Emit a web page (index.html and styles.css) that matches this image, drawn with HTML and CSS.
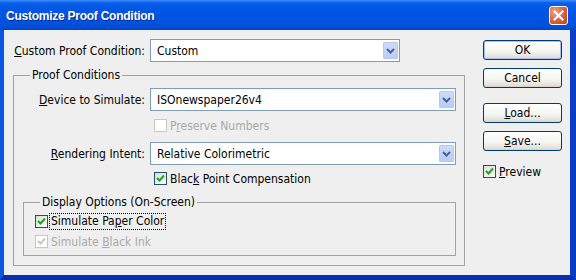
FILE: index.html
```html
<!DOCTYPE html>
<html lang="en">
<head>
    <meta charset="UTF-8">
    <title>Customize Proof Condition</title>
    <link rel="stylesheet" href="styles.css">
</head>
<body>
    <div class="window">
        <div class="titlebar">
            <span class="title">Customize Proof Condition</span>
            <span class="close">
                <svg width="17" height="17" viewBox="0 0 17 17"><path d="M4.5 4.5 L12.5 12.5 M12.5 4.5 L4.5 12.5" stroke="#fff" stroke-width="2.2" stroke-linecap="square"/></svg>
            </span>
        </div>

        <div class="frame">
            <div class="main">
                <div class="field">
                    <span class="label wide"><u>C</u>ustom Proof Condition:</span>
                    <div class="select short">
                        <span class="value">Custom</span>
                        <span class="arrow"><svg width="15" height="17" viewBox="0 0 15 17"><path d="M4 7 L7.5 10.5 L11 7" fill="none" stroke="#4d6185" stroke-width="2"/></svg></span>
                    </div>
                </div>

                <fieldset class="group outer">
                    <legend>Proof Conditions</legend>

                    <div class="field">
                        <span class="label"><u>D</u>evice to Simulate:</span>
                        <div class="select">
                            <span class="value">ISOnewspaper26v4</span>
                            <span class="arrow"><svg width="15" height="17" viewBox="0 0 15 17"><path d="M4 7 L7.5 10.5 L11 7" fill="none" stroke="#4d6185" stroke-width="2"/></svg></span>
                        </div>
                    </div>

                    <div class="check indent disabled gap-preserve">
                        <span class="box"></span>
                        <span>P<u>r</u>eserve Numbers</span>
                    </div>

                    <div class="field gap-render">
                        <span class="label"><u>R</u>endering Intent:</span>
                        <div class="select">
                            <span class="value">Relative Colorimetric</span>
                            <span class="arrow"><svg width="15" height="17" viewBox="0 0 15 17"><path d="M4 7 L7.5 10.5 L11 7" fill="none" stroke="#4d6185" stroke-width="2"/></svg></span>
                        </div>
                    </div>

                    <div class="check indent gap-black">
                        <span class="box"><svg width="11" height="11" viewBox="0 0 11 11"><path d="M2 5 L4.5 7.5 L9 2.5" fill="none" stroke="#21a121" stroke-width="2"/></svg></span>
                        <span>Blac<u>k</u> Point Compensation</span>
                    </div>

                    <fieldset class="group inner">
                        <legend>Display Options (On-Screen)</legend>

                        <div class="check">
                            <span class="box"><svg width="11" height="11" viewBox="0 0 11 11"><path d="M2 5 L4.5 7.5 L9 2.5" fill="none" stroke="#21a121" stroke-width="2"/></svg></span>
                            <span class="focus">Simulate Pa<u>p</u>er Color</span>
                        </div>

                        <div class="check disabled gap-ink">
                            <span class="box"><svg width="11" height="11" viewBox="0 0 11 11"><path d="M2 5 L4.5 7.5 L9 2.5" fill="none" stroke="#cac8bb" stroke-width="2"/></svg></span>
                            <span>Simulate <u>B</u>lack Ink</span>
                        </div>
                    </fieldset>
                </fieldset>
            </div>

            <div class="side">
                <button class="btn default">OK</button>
                <button class="btn">Cancel</button>
                <button class="btn gap-load"><u>L</u>oad...</button>
                <button class="btn"><u>S</u>ave...</button>
                <div class="check gap-preview">
                    <span class="box"><svg width="11" height="11" viewBox="0 0 11 11"><path d="M2 5 L4.5 7.5 L9 2.5" fill="none" stroke="#21a121" stroke-width="2"/></svg></span>
                    <span><u>P</u>review</span>
                </div>
            </div>
        </div>
    </div>
</body>
</html>
```

FILE: styles.css
```css
body {
    margin: 0;
    font-family: "DejaVu Sans Condensed", "DejaVu Sans", sans-serif;
    font-stretch: condensed;
    font-size: 12px;
    color: #000;
}

.window {
    width: 576px;
    height: 280px;
    display: flex;
    flex-direction: column;
}

.titlebar {
    height: 30px;
    flex: none;
    display: flex;
    align-items: center;
    justify-content: space-between;
    padding: 0 8px 0 6px;
    background: linear-gradient(#3d8ffb 0, #0a5ee9 3px, #0056e6 9px, #0054e3 60%, #0150d8 88%, #0344c4 100%);
}

.title {
    font-family: "Liberation Sans", Arial, sans-serif;
    font-stretch: normal;
    font-weight: bold;
    font-size: 12px;
    letter-spacing: -0.25px;
    color: #fff;
    text-shadow: 1px 1px 0 #0a2a9a;
    padding-top: 2px;
}

.close {
    width: 17px;
    height: 17px;
    border: 1px solid #fff;
    border-radius: 3px;
    background: radial-gradient(circle at 30% 30%, #f2a283 0%, #de5d36 55%, #c2401e 100%);
    display: flex;
}

.frame {
    flex: 1;
    display: flex;
    gap: 18px;
    padding: 9px 0 0 9px;
    background: #efefef;
    border-left: 4px solid #0b56e2;
    border-right: 6px solid #0a3cc8;
    border-bottom: 5px solid #0a2fae;
}

.main {
    width: 452px;
}

.field {
    display: flex;
    align-items: center;
    height: 23px;
}

.label {
    width: 127px;
    flex: none;
    box-sizing: border-box;
    padding-right: 5px;
    text-align: right;
    white-space: nowrap;
}

.label.wide {
    width: 137px;
}

.select {
    flex: 1;
    height: 23px;
    box-sizing: border-box;
    border: 1px solid #7f9db9;
    background: #fff;
    display: flex;
    align-items: center;
    justify-content: space-between;
    padding: 0 1px 0 6px;
}

.select.short {
    flex: none;
    width: 250px;
}

.arrow {
    width: 15px;
    height: 17px;
    box-sizing: border-box;
    border: 1px solid #b8c8f0;
    border-radius: 1px;
    background: linear-gradient(#cddbfc, #b8cbfa);
    display: flex;
}

.arrow svg {
    margin: -1px;
}

.group {
    margin: 0;
    min-width: 0;
    border: 1px solid #a3a3a3;
}

.group legend {
    line-height: 16px;
    padding: 0 2px;
}

.outer {
    margin-top: 5px;
    padding: 5px 8px 9px 9px;
}

.outer > legend {
    margin-left: 7px;
}

.inner {
    margin-top: 8px;
    padding: 4px 8px 6px 11px;
}

.inner > legend {
    margin-left: 5px;
}

.check {
    display: flex;
    align-items: center;
    gap: 3px;
    height: 15px;
    white-space: nowrap;
}

.check.indent {
    padding-left: 131px;
}

.box {
    width: 13px;
    height: 13px;
    flex: none;
    box-sizing: border-box;
    border: 1px solid #1c5180;
    background: linear-gradient(135deg, #dcdcd7, #fff);
    display: flex;
    align-items: center;
    justify-content: center;
}

.disabled {
    color: #a9a9a9;
}

.disabled .box {
    border-color: #cac8bb;
    background: #fff;
}

.focus {
    outline: 1px dotted #000;
    padding: 0 1px;
    margin-left: -1px;
    line-height: 15px;
}

.gap-preserve {
    margin-top: 7px;
}

.gap-render {
    margin-top: 9px;
}

.gap-black {
    margin-top: 6px;
}

.gap-ink {
    margin-top: 5px;
}

.side {
    width: 79px;
    padding-top: 1px;
    display: flex;
    flex-direction: column;
}

.btn {
    height: 20px;
    margin: 0;
    padding: 0;
    font: inherit;
    color: #000;
    border: 1px solid #003c74;
    border-radius: 3px;
    background: linear-gradient(#ffffff 0%, #f4f4f0 60%, #e3e1d8 90%, #d6d0c5 100%);
}

.btn + .btn {
    margin-top: 8px;
}

.btn.default {
    box-shadow: inset 0 0 0 1px #a9bdee;
}

.btn.gap-load {
    margin-top: 15px;
}

.gap-preview {
    margin-top: 13px;
}
```
